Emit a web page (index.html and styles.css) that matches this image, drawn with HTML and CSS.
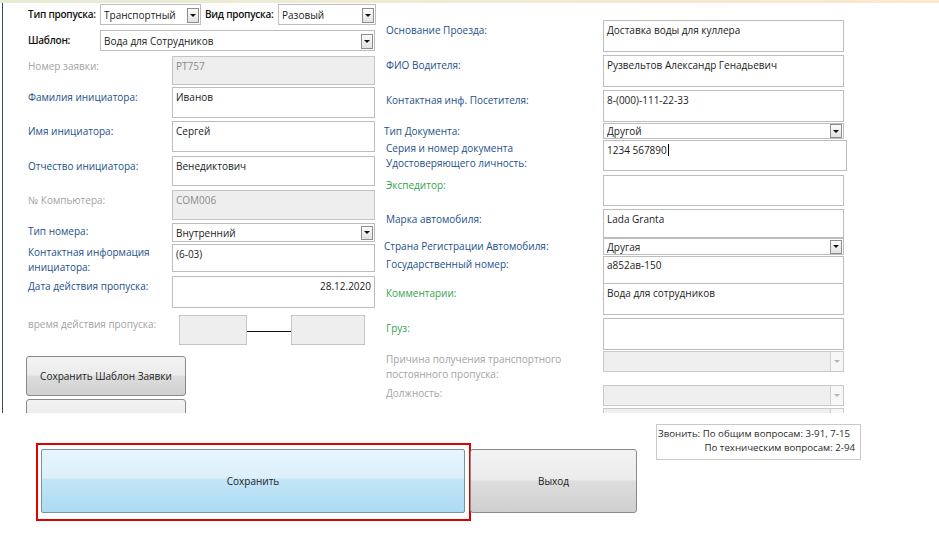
FILE: index.html
```html
<!DOCTYPE html>
<html lang="ru">
<head>
<meta charset="utf-8">
<title>Пропуск</title>
<link rel="stylesheet" href="styles.css">
</head>
<body>
<div class="topbar"></div>
<div class="form">
  <div class="col col-left">
    <div class="row r1">
      <span class="lbl lbl-dark lbl-type">Тип пропуска:</span>
      <div class="sel sel-type"><span class="val">Транспортный</span><span class="arrow"></span></div>
      <span class="lbl lbl-dark lbl-kind">Вид пропуска:</span>
      <div class="sel sel-kind"><span class="val">Разовый</span><span class="arrow"></span></div>
    </div>
    <div class="row r2">
      <span class="lbl lbl-dark lbl-type">Шаблон:</span>
      <div class="sel sel-tpl"><span class="val">Вода для Сотрудников</span><span class="arrow"></span></div>
    </div>
    <div class="row r3">
      <span class="lbl lbl-gray lw">Номер заявки:</span>
      <div class="box box-l box-dis h29">РТ757</div>
    </div>
    <div class="row r4">
      <span class="lbl lbl-blue lw">Фамилия инициатора:</span>
      <div class="box box-l h31">Иванов</div>
    </div>
    <div class="row r5">
      <span class="lbl lbl-blue lw">Имя инициатора:</span>
      <div class="box box-l h31">Сергей</div>
    </div>
    <div class="row r6">
      <span class="lbl lbl-blue lw">Отчество инициатора:</span>
      <div class="box box-l h30">Венедиктович</div>
    </div>
    <div class="row r7">
      <span class="lbl lbl-gray lw">№ Компьютера:</span>
      <div class="box box-l box-dis h30">COM006</div>
    </div>
    <div class="row r8">
      <span class="lbl lbl-blue lw pt0">Тип номера:</span>
      <div class="sel sel-wide sel-num"><span class="val">Внутренний</span><span class="arrow"></span></div>
    </div>
    <div class="row r9">
      <span class="lbl lbl-blue lw two pt1">Контактная информация<br>инициатора:</span>
      <div class="box box-l h28">(6-03)</div>
    </div>
    <div class="row r10">
      <span class="lbl lbl-blue lw">Дата действия пропуска:</span>
      <div class="box box-l box-right h32">28.12.2020</div>
    </div>
    <div class="row r11">
      <span class="lbl lbl-gray lw-time pt2">время действия пропуска:</span>
      <div class="tbox"></div>
      <div class="dash"></div>
      <div class="tbox tbox-2"></div>
    </div>
    <div class="row r12">
      <button class="btn btn-tpl">Сохранить Шаблон Заявки</button>
    </div>
    <div class="row r13">
      <button class="btn btn-tpl" aria-label="Загрузить шаблон"></button>
    </div>
  </div>

  <div class="col col-right">
    <div class="row q1">
      <span class="lbl lbl-blue rw">Основание Проезда:</span>
      <div class="box box-r h32">Доставка воды для куллера</div>
    </div>
    <div class="row q2">
      <span class="lbl lbl-blue rw">ФИО Водителя:</span>
      <div class="box box-r h32">Рузвельтов Александр Генадьевич</div>
    </div>
    <div class="row q3">
      <span class="lbl lbl-blue rw">Контактная инф. Посетителя:</span>
      <div class="box box-r h32">8-(000)-111-22-33</div>
    </div>
    <div class="row q4">
      <span class="lbl lbl-blue rw pt0 shift">Тип Документа:</span>
      <div class="sel sel-r sel-sm"><span class="val">Другой</span><span class="arrow"></span></div>
    </div>
    <div class="row q5">
      <span class="lbl lbl-blue rw two pt1">Серия и номер документа<br>Удостоверяющего личность:</span>
      <div class="box box-r box-wider h31">1234 567890<span class="caret"></span></div>
    </div>
    <div class="row q6">
      <span class="lbl lbl-green rw">Экспедитор:</span>
      <div class="box box-r h31"></div>
    </div>
    <div class="row q7">
      <span class="lbl lbl-blue rw">Марка автомобиля:</span>
      <div class="box box-r h29">Lada Granta</div>
    </div>
    <div class="row q8">
      <span class="lbl lbl-blue rw pt1 shift">Страна Регистрации Автомобиля:</span>
      <div class="sel sel-r sel-sm2"><span class="val">Другая</span><span class="arrow"></span></div>
    </div>
    <div class="row q9">
      <span class="lbl lbl-blue rw pt0">Государственный номер:</span>
      <div class="box box-r h28 pt0b">а852ав-150</div>
    </div>
    <div class="row q10">
      <span class="lbl lbl-green rw">Комментарии:</span>
      <div class="box box-r h32">Вода для сотрудников</div>
    </div>
    <div class="row q11">
      <span class="lbl lbl-green rw">Груз:</span>
      <div class="box box-r h32"></div>
    </div>
    <div class="row q12">
      <span class="lbl lbl-gray rw two pt0">Причина получения транспортного<br>постоянного пропуска:</span>
      <div class="sel sel-r sel-dis h33"><span class="val"></span><span class="arrow arrow-dis"></span></div>
    </div>
    <div class="row q13">
      <span class="lbl lbl-gray rw pt1">Должность:</span>
      <div class="sel sel-r sel-dis h22"><span class="val"></span><span class="arrow arrow-dis"></span></div>
    </div>
    <div class="row q14">
      <span class="lbl lbl-gray rw pt1"></span>
      <div class="sel sel-r sel-dis h22"><span class="val"></span><span class="arrow arrow-dis"></span></div>
    </div>
  </div>
</div>

<div class="bottom">
  <div class="frame">
    <button class="btn btn-save">Сохранить</button>
  </div>
  <button class="btn btn-exit">Выход</button>
  <div class="info">
    <div>Звонить: По общим вопросам: 3-91, 7-15</div>
    <div class="info-2">По техническим вопросам: 2-94</div>
  </div>
</div>
</body>
</html>
```

FILE: styles.css
```css
* { box-sizing: border-box; }

html, body {
  margin: 0;
  padding: 0;
  background: #ffffff;
}

body {
  font-family: "Open Sans", "Noto Sans", sans-serif;
  font-size: 10px;
  color: #1b1b1b;
  width: 939px;
  height: 541px;
  overflow: hidden;
}

.topbar {
  height: 3px;
  background: linear-gradient(90deg, #e5ecd6 0%, #f1ead3 45%, #fbe8cf 100%);
}

.form {
  display: flex;
  height: 410px;
  margin-left: 2px;
  border-left: 1px solid #3d4a5e;
  overflow: hidden;
}

.col {
  display: flex;
  flex-direction: column;
}

.col-left {
  width: 381px;
  padding-top: 1px;
  padding-left: 25px;
  flex: none;
}

.col-right {
  padding-top: 17px;
  padding-left: 2px;
}

.row {
  display: flex;
  align-items: flex-start;
  flex: none;
}

/* left column row heights */
.r1 { height: 26px; }
.r2 { height: 26px; }
.r3 { height: 31px; }
.r4 { height: 34px; }
.r5 { height: 35px; }
.r6 { height: 34px; }
.r7 { height: 33px; }
.r8 { height: 21px; }
.r9 { height: 32px; }
.r10 { height: 39px; }
.r11 { height: 41px; }
.r12 { height: 43px; margin-left: -2px; }
.r13 { height: 43px; margin-left: -2px; }

/* right column row heights */
.q1 { height: 35px; }
.q2 { height: 35px; }
.q3 { height: 33px; }
.q4 { height: 17px; }
.q5 { height: 35px; }
.q6 { height: 34px; }
.q7 { height: 29px; }
.q8 { height: 18px; }
.q9 { height: 27px; }
.q10 { height: 35px; }
.q11 { height: 33px; }
.q12 { height: 34px; }
.q13 { height: 23px; }
.q14 { height: 30px; }

/* labels */
.lbl {
  line-height: 14px;
  padding-top: 3px;
  white-space: nowrap;
  flex: none;
}
.lbl.two { line-height: 15px; }
.pt0 { padding-top: 1px; }
.pt1 { padding-top: 1px; }
.pt2 { padding-top: 2px; }
.shift { margin-left: -2px; margin-right: 2px; }

.lbl-dark { color: #111; font-weight: 600; letter-spacing: -0.25px; }
.lbl-blue { color: #24508a; }
.lbl-green { color: #35a24f; }
.lbl-gray { color: #a3a3a3; }

.lbl-type { width: 72px; }
.lbl-kind { width: 73px; margin-left: 4px; }
.lw { width: 144px; }
.lw-time { width: 151px; }
.rw { width: 217px; }

/* text boxes */
.box {
  border: 1px solid #bdbdbd;
  background: #fff;
  padding: 2px 3px;
  line-height: 14px;
  white-space: nowrap;
  overflow: hidden;
  flex: none;
}
.box-l { width: 203px; }
.box-r { width: 241px; }
.box-wider { width: 244px; }
.box-dis { background: #eeeeee; color: #8c8c8c; border-color: #c4c4c4; }
.box-right { text-align: right; }
.pt0b { padding-top: 1px; }

.h22 { height: 22px; }
.h28 { height: 28px; }
.h29 { height: 29px; }
.h30 { height: 30px; }
.h31 { height: 31px; }
.h32 { height: 32px; }
.h33 { height: 33px; }

.caret {
  display: inline-block;
  width: 1px;
  height: 12px;
  background: #000;
  vertical-align: -2px;
  margin-left: 1px;
}

/* selects */
.sel {
  display: flex;
  align-items: center;
  border: 1px solid #bdbdbd;
  background: #fff;
  height: 21px;
  padding-left: 3px;
  padding-right: 1px;
  flex: none;
  line-height: 14px;
}
.sel .val { flex: 1; white-space: nowrap; overflow: hidden; }
.sel-type { width: 101px; }
.sel-kind { width: 98px; }
.sel-tpl { width: 275px; }
.sel-wide { width: 203px; }
.sel-num { height: 19px; }
.sel-r { width: 241px; }
.sel-sm { height: 16px; }
.sel-sm2 { height: 17px; }
.sel-dis { background: #efefef; border-color: #c9c9c9; color: #9a9a9a; align-items: stretch; padding-right: 0; }
.sel-dis .val { padding-top: 2px; }
.sel-tpl .arrow, .sel-type .arrow, .sel-kind .arrow { align-self: flex-end; margin-bottom: 1px; }

.arrow {
  width: 12px;
  height: 15px;
  flex: none;
  border: 1px solid #8d8d8d;
  background: linear-gradient(#fbfbfb, #e2e2e2);
  display: flex;
  align-items: center;
  justify-content: center;
}
.sel-sm .arrow, .sel-sm2 .arrow, .sel-num .arrow { height: 14px; }
.arrow::after {
  content: "";
  width: 0;
  height: 0;
  border-left: 3px solid transparent;
  border-right: 3px solid transparent;
  border-top: 3px solid #111;
}
.arrow-dis {
  height: auto;
  width: 13px;
  border: none;
  border-left: 1px solid #cfcfcf;
  background: #f7f7f7;
}
.arrow-dis::after { border-top-color: #b5b5b5; }

/* time boxes */
.tbox {
  width: 68px;
  height: 30px;
  border: 1px solid #c4c4c4;
  background: #eeeeee;
  flex: none;
}
.tbox-2 { width: 74px; }
.dash {
  width: 44px;
  height: 1px;
  background: #111;
  margin-top: 16px;
  flex: none;
}

/* buttons */
.btn {
  font-family: "Open Sans", "Noto Sans", sans-serif;
  font-size: 10px;
  color: #222;
  border: 1px solid #8a8a8a;
  border-radius: 3px;
  background: linear-gradient(#f3f3f3 0%, #ebebeb 48%, #dddddd 50%, #d0d0d0 100%);
  padding: 0;
  flex: none;
}
.btn-tpl {
  width: 160px;
  height: 40px;
}

.bottom {
  display: flex;
  align-items: flex-start;
  padding-top: 11px;
}
.frame {
  margin-left: 36px;
  margin-top: 19px;
  border: 2px solid #e00000;
  padding: 4px 4px 6px 3px;
  flex: none;
}
.btn-save {
  display: block;
  width: 424px;
  height: 64px;
  border-color: #7892a6;
  border-radius: 2px;
  background: linear-gradient(#e7f5fc 0%, #dcf0fa 45%, #c3e5f7 47%, #acdbf4 100%);
}
.btn-exit {
  width: 167px;
  height: 64px;
  margin-left: -1px;
  margin-top: 25px;
}

.info {
  margin-left: 19px;
  width: 205px;
  height: 36px;
  border: 1px solid #c8c8c8;
  padding: 2px 2px 0 1px;
  font-size: 9.7px;
  line-height: 14px;
  color: #2a2a2a;
  white-space: nowrap;
  flex: none;
}
.info-2 { text-align: right; padding-right: 3px; }
```
